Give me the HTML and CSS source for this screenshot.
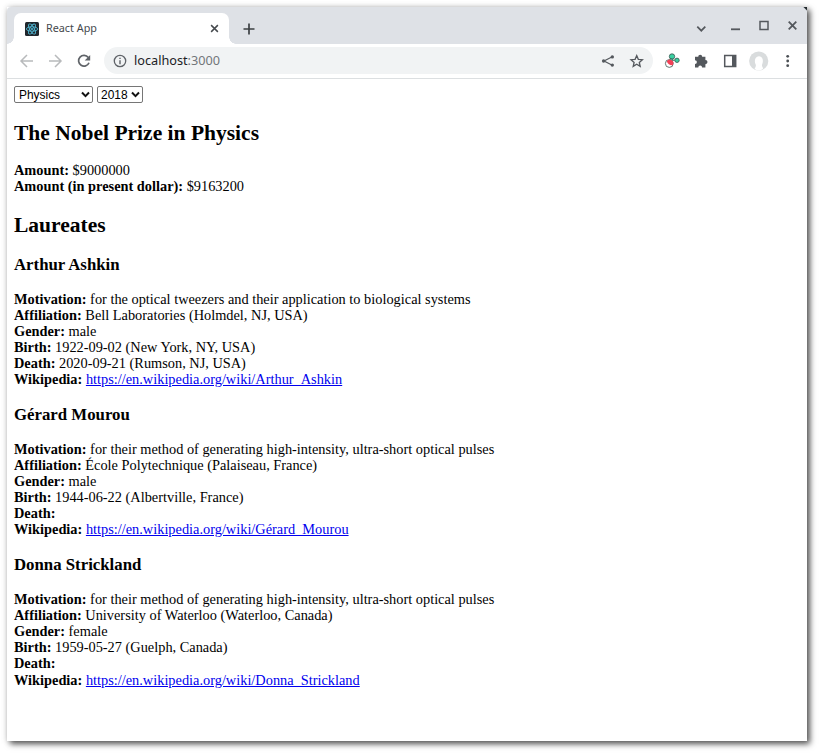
FILE: index.html
```html
<!DOCTYPE html>
<html lang="en">
<head>
<meta charset="utf-8">
<title>React App</title>
<link rel="stylesheet" href="styles.css">
</head>
<body>
<div class="backdrop">
<div class="window">
  <header class="tabstrip">
    <div class="tab">
      <svg class="favicon" viewBox="0 0 14 14"><rect width="14" height="14" rx="1.5" fill="#20262c"/><g fill="none" stroke="#4fb4d0" stroke-width=".9"><ellipse cx="7" cy="7" rx="5.7" ry="2.2"/><ellipse cx="7" cy="7" rx="5.7" ry="2.2" transform="rotate(60 7 7)"/><ellipse cx="7" cy="7" rx="5.7" ry="2.2" transform="rotate(120 7 7)"/></g><circle cx="7" cy="7" r="1.1" fill="#4fb4d0"/></svg>
      <span class="tab-title">React App</span>
      <svg class="tab-close" viewBox="0 0 8 8"><path d="M1 1l6 6M7 1L1 7" stroke="#45494d" stroke-width="1.3"/></svg>
    </div>
    <svg class="new-tab" viewBox="0 0 12 12"><path d="M6 .5v11M.5 6h11" stroke="#3c4043" stroke-width="1.7"/></svg>
    <svg class="controls" viewBox="0 0 120 36" fill="none" stroke="#54585d"><path d="M10.3 18.7l4 4 4-4" stroke-width="1.7"/><path d="M44 21.3h9" stroke-width="1.8"/><rect x="73" y="13.5" width="8" height="8" stroke-width="1.5"/><path d="M101.7 13.7l7.6 7.6M109.3 13.7l-7.6 7.6" stroke-width="1.8"/></svg>
  </header>
  <nav class="toolbar">
    <svg class="nav-icons" viewBox="0 0 97 34" fill="none" stroke-width="1.5"><path d="M26 17H14.5M20 11l-6 6 6 6" stroke="#b8babc"/><path d="M42 17h11.5M48 11l6 6-6 6" stroke="#b8babc"/><path d="M81.3 13.5A5.4 5.4 0 1 0 82 18.8" stroke="#5f6368" stroke-width="1.7"/><path d="M83.2 11v5.5h-5.5z" fill="#5f6368"/></svg>
    <div class="omnibox">
      <svg class="info" viewBox="0 0 14 14"><circle cx="7" cy="7" r="5.7" fill="none" stroke="#5f6368" stroke-width="1.3"/><path d="M7 6.2v4M7 3.7v1.4" stroke="#5f6368" stroke-width="1.4"/></svg>
      <span class="url">localhost<span class="port">:3000</span></span>
      <svg class="share" viewBox="0 0 50 18" fill="none" stroke="#54585d"><path d="M13.3 4.7L5 9l8.3 4.3" stroke-width="1.2"/><g fill="#54585d" stroke="none"><circle cx="13.3" cy="4.9" r="1.7"/><circle cx="4.6" cy="9" r="1.7"/><circle cx="13.3" cy="13.1" r="1.7"/></g><path d="M37.7 3.6l1.6 3.7 4.1.4-3.1 2.7.9 4-3.5-2.1-3.5 2.1.9-4-3.1-2.7 4.1-.4z" stroke-width="1.3"/></svg>
    </div>
    <svg class="extensions" viewBox="0 0 154 34">
      <g stroke="#3b5551" stroke-width=".8"><path d="M16 18l2-5M17 17l5-1" fill="none"/><circle cx="19" cy="12.5" r="2.7" fill="#3ad1a2"/><circle cx="24" cy="16.3" r="2.2" fill="#3ad1a2"/><circle cx="18.4" cy="16.3" r="1.5" fill="#3ad1a2"/><circle cx="16.3" cy="19.5" r="3.9" fill="#fff"/></g><path d="M13.8 17.2a3.5 3.5 0 0 1 5.9 4c-2 .6-5-1-5.9-4z" fill="#f24157"/>
      <path d="M43 12.8h2.2a2 2 0 0 1 4 0h3.2V16a2.1 2.1 0 0 1 0 4.2v3.2h-3.3a1.9 1.9 0 0 0-3.8 0H42V20a1.9 1.9 0 0 0 0-3.8v-3.4z" fill="#54585d"/>
      <path d="M71.7 11.5h11v11h-11z" fill="none" stroke="#54585d" stroke-width="1.5"/><path d="M79 11.5h3.7v11H79z" fill="#54585d"/>
      <circle cx="105.7" cy="17" r="9.6" fill="#d9dcdd"/><path d="M101.5 25c1-2 1.8-3 1.2-4.5-2-4 0-8.2 3.3-8.2s5 4.2 3.1 8.2c-.6 1.8.6 2.3 1.1 4-2 2.2-6 2.6-8.7.5z" fill="#fff"/>
      <g fill="#4b4f54"><circle cx="134.7" cy="12.3" r="1.4"/><circle cx="134.7" cy="17" r="1.4"/><circle cx="134.7" cy="21.7" r="1.4"/></g>
    </svg>
  </nav>
  <main class="page">
    <div class="filters">
      <div class="picker category"><select><option>Physics</option></select><svg class="chevron" viewBox="0 0 9 7"><path d="M1 1.5l3.5 3.6L8 1.5" fill="none" stroke="#111" stroke-width="2"/></svg></div>
      <div class="picker year"><select><option>2018</option></select><svg class="chevron" viewBox="0 0 9 7"><path d="M1 1.5l3.5 3.6L8 1.5" fill="none" stroke="#111" stroke-width="2"/></svg></div>
    </div>
    <h2>The Nobel Prize in Physics</h2>
    <div><b>Amount:</b> $9000000</div>
    <div><b>Amount (in present dollar):</b> $9163200</div>
    <h2>Laureates</h2>
    <section>
      <h3>Arthur Ashkin</h3>
      <div><b>Motivation:</b> for the optical tweezers and their application to biological systems</div>
      <div><b>Affiliation:</b> Bell Laboratories (Holmdel, NJ, USA)</div>
      <div><b>Gender:</b> male</div>
      <div><b>Birth:</b> 1922-09-02 (New York, NY, USA)</div>
      <div><b>Death:</b> 2020-09-21 (Rumson, NJ, USA)</div>
      <div><b>Wikipedia:</b> <a href="#">https://en.wikipedia.org/wiki/Arthur_Ashkin</a></div>
    </section>
    <section>
      <h3>Gérard Mourou</h3>
      <div><b>Motivation:</b> for their method of generating high-intensity, ultra-short optical pulses</div>
      <div><b>Affiliation:</b> École Polytechnique (Palaiseau, France)</div>
      <div><b>Gender:</b> male</div>
      <div><b>Birth:</b> 1944-06-22 (Albertville, France)</div>
      <div><b>Death:</b></div>
      <div><b>Wikipedia:</b> <a href="#">https://en.wikipedia.org/wiki/Gérard_Mourou</a></div>
    </section>
    <section>
      <h3>Donna Strickland</h3>
      <div><b>Motivation:</b> for their method of generating high-intensity, ultra-short optical pulses</div>
      <div><b>Affiliation:</b> University of Waterloo (Waterloo, Canada)</div>
      <div><b>Gender:</b> female</div>
      <div><b>Birth:</b> 1959-05-27 (Guelph, Canada)</div>
      <div><b>Death:</b></div>
      <div><b>Wikipedia:</b> <a href="#">https://en.wikipedia.org/wiki/Donna_Strickland</a></div>
    </section>
  </main>
</div>
</div>
</body>
</html>
```
FILE: styles.css
```css
* { box-sizing: border-box; }
html, body { margin: 0; height: 100%; overflow: hidden; background: #fff; }
svg { display: block; flex: none; }
.backdrop { padding: 7px; }
.window {
  width: 800px;
  height: 734px;
  background: #fff;
  box-shadow: 3px 3px 6px rgba(0, 0, 0, .65), 0 0 6px rgba(0, 0, 0, .15);
}
.tabstrip {
  height: 37px;
  display: flex;
  align-items: center;
  background: linear-gradient(225deg, #20272b 2px, #dee1e6 3px);
  border-top-left-radius: 4px;
}
.tab {
  position: relative;
  align-self: flex-end;
  width: 215px;
  height: 31px;
  margin-left: 7px;
  padding: 0 10px 0 11px;
  display: flex;
  align-items: center;
  background: #fff;
  border-radius: 7px 7px 0 0;
}
.tab::before, .tab::after {
  content: "";
  position: absolute;
  bottom: 0;
  width: 7px;
  height: 7px;
}
.tab::before { left: -7px; background: radial-gradient(circle at 0 0, #dee1e6 6.5px, #fff 7px); }
.tab::after { right: -7px; background: radial-gradient(circle at 100% 0, #dee1e6 6.5px, #fff 7px); }
.favicon { width: 14px; height: 14px; }
.tab-title {
  flex: 1;
  margin: -3px 0 0 7px;
  font: 10.8px "Noto Sans", sans-serif;
  color: #45494d;
}
.tab-close { width: 9px; height: 9px; }
.new-tab { width: 12px; height: 12px; margin-left: 14px; margin-top: 6px; }
.controls { width: 120px; height: 36px; margin-left: auto; }
.toolbar {
  height: 35px;
  display: flex;
  border-bottom: 1px solid #dcdfe1;
}
.nav-icons { width: 97px; height: 34px; }
.omnibox {
  width: 549px;
  height: 27px;
  margin-top: 3px;
  border-radius: 14px;
  background: #f1f3f4;
  display: flex;
  align-items: center;
  padding: 0 4px 0 9px;
}
.info { width: 14px; height: 14px; }
.url {
  flex: 1;
  margin: -2px 0 0 7px;
  font: 12.7px "Noto Sans", sans-serif;
  color: #202124;
}
.port { color: #72767a; }
.share { width: 50px; height: 18px; }
.extensions { width: 154px; height: 34px; }
.page {
  padding: 7px 7px 0;
  font: 14.35px/16.1px "Liberation Serif", serif;
  color: #000;
}
.filters { display: flex; gap: 4px; height: 17px; }
.picker { position: relative; height: 17px; }
.category { width: 79px; }
.year { width: 46px; }
select {
  display: block;
  width: 100%;
  height: 17px;
  margin: 0;
  padding: 0 0 0 4px;
  appearance: none;
  border: 1px solid #767676;
  border-radius: 2px;
  background: #fff;
  color: #000;
  font: 11.93px "Liberation Sans", sans-serif;
}
.year select { padding-left: 3px; }
.chevron {
  position: absolute;
  right: 3px;
  top: 5px;
  width: 9px;
  height: 7px;
  pointer-events: none;
}
h2 { margin: 18px 0 17.2px; font-size: 21.52px; line-height: 24px; }
h2 ~ h2 { margin: 18.6px 0 18px; }
h3 { margin: 0 0 15.8px; font-size: 16.79px; line-height: 20px; }
section + section { margin-top: 17.8px; }
a { color: #0000ee; }
```
